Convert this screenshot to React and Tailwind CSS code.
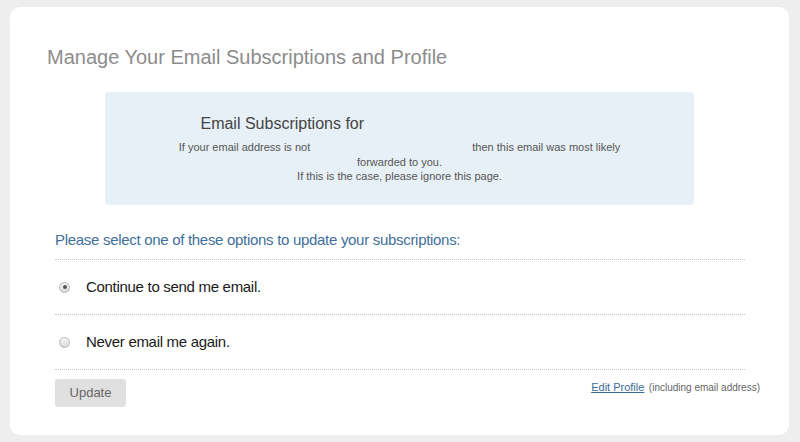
import React from 'react';

const Radio = ({ checked }) => (
  <span className="ml-[4px] mr-[16px] flex h-[11px] w-[11px] shrink-0 items-center justify-center rounded-full border border-[#b4b4b4] bg-gradient-to-b from-[#f6f6f6] to-[#d9d9d9]">
    {checked && <span className="h-[4px] w-[4px] rounded-full bg-[#555]" />}
  </span>
);

const App = () => {
  return (
    <div className="h-[442px] w-[800px] bg-[#eeeeee] pt-[7px] pl-[10px] font-['Liberation_Sans',Arial,sans-serif]">
      <div className="h-[428px] w-[779px] rounded-[10px] bg-white pt-[38px]">
        <h1 className="pl-[37px] text-[20px] leading-[24px] text-[#8c8c8c]">
          Manage Your Email Subscriptions and Profile
        </h1>

        {/* Encadré bleu */}
        <div className="mx-auto mt-[23px] h-[113px] w-[589px] rounded-[4px] bg-[#e8f0f7] pt-[22px] text-center">
          <div className="text-[16px] leading-[20px] text-[#444]">
            Email Subscriptions for <span className="inline-block w-[230px]" />
          </div>
          <p className="mt-[6px] text-[11px] leading-[14.5px] text-[#555]">
            If your email address is not <span className="inline-block w-[156px]" /> then this email was most likely
            <br />
            forwarded to you.
            <br />
            If this is the case, please ignore this page.
          </p>
        </div>

        <div className="pl-[45px] pr-[44px]">
          <p className="mt-[25px] border-b border-dotted border-[#c4c4c4] pb-[9px] text-[15px] leading-[20px] tracking-[-0.3px] text-[#3f6f9b]">
            Please select one of these options to update your subscriptions:
          </p>
          <label className="flex h-[55px] items-center border-b border-dotted border-[#c4c4c4] text-[15px] tracking-[-0.3px] text-[#1a1a1a]">
            <Radio checked />
            Continue to send me email.
          </label>
          <label className="flex h-[55px] items-center border-b border-dotted border-[#c4c4c4] text-[15px] tracking-[-0.3px] text-[#1a1a1a]">
            <Radio />
            Never email me again.
          </label>

          <div className="mt-[9px] flex items-start justify-between">
            <button className="h-[28px] w-[71px] rounded-[3px] bg-[#e0e0e0] text-[13px] text-[#666]">
              Update
            </button>
            <div className="mr-[-15px] leading-[14px]">
              <a href="#" className="text-[11px] text-[#3a6a98] underline">
                Edit Profile
              </a>{' '}
              <span className="text-[10px] text-[#666]">(including email address)</span>
            </div>
          </div>
        </div>
      </div>
    </div>
  );
};

export default App;
